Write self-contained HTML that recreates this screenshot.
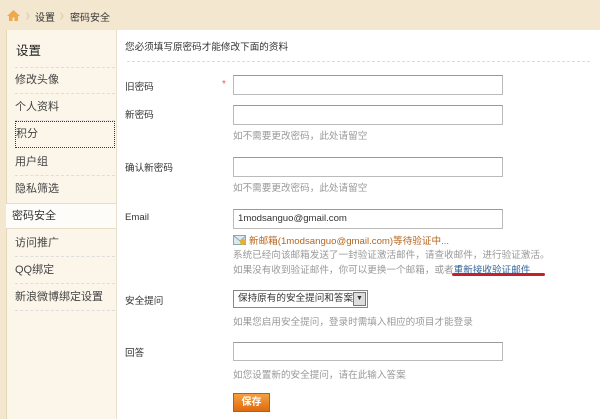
<!DOCTYPE html><html><head><meta charset="utf-8"><style>
*{margin:0;padding:0;box-sizing:border-box}
body{width:600px;height:419px;overflow:hidden;background:#f4e7cf;font-family:"Liberation Sans","Noto Sans CJK SC",sans-serif;font-size:9.6px;color:#333;position:relative}
.a{position:absolute;white-space:nowrap}
.side{position:absolute;left:6px;top:30px;width:110px;height:389px;background:#fbf5ea;border-left:1px solid #e6d6b8}
.main{position:absolute;left:116px;top:30px;width:484px;height:389px;background:#fff;border-left:1px solid #eadfca}
.it{position:absolute;left:8px;width:100px;border-bottom:1px dashed #ddd;height:27px;line-height:27px;font-size:11px;color:#444}
.inp{position:absolute;left:233px;width:270px;height:20px;border:1px solid #bbb;border-top-color:#999;background:#fff}
.hint{color:#999;font-size:9.6px}
</style></head><body>
<svg class="a" style="left:7px;top:10px" width="13" height="11" viewBox="0 0 13 11"><path d="M6.5 0L0 6h2v5h3.5V7.5h2V11H11V6h2z" fill="#f0a94a"/></svg>
<svg class="a" style="left:26px;top:12px" width="4" height="8"><path d="M0.5 0.5L3 4L0.5 7.5" stroke="#d8c8a8" fill="none"/></svg>
<div class="a" style="left:35px;top:9px;font-size:10px;color:#333">设置</div>
<svg class="a" style="left:60px;top:12px" width="4" height="8"><path d="M0.5 0.5L3 4L0.5 7.5" stroke="#d8c8a8" fill="none"/></svg>
<div class="a" style="left:70px;top:9px;font-size:10px;color:#333">密码安全</div>
<div class="side">
<div class="a" style="left:9px;top:10px;font-size:12.5px;color:#222">设置</div>
<div style="position:absolute;left:8px;top:37px;width:100px;border-top:1px dashed #ddd"></div>
<div class="it" style="top:37px">修改头像</div>
<div class="it" style="top:64px">个人资料</div>
<div class="it" style="top:91px;left:8px;border:1px dotted #333;height:27px;line-height:25px">积分</div>
<div class="it" style="top:119px">用户组</div>
<div class="it" style="top:146px;border:0">隐私筛选</div>
<div style="position:absolute;left:-1px;top:173px;width:112px;height:26px;background:#fefcf8;border-top:1px solid #e6dcc8;border-bottom:1px solid #e6dcc8;padding-left:6px;line-height:24px;font-size:11px;color:#333">密码安全</div>
<div class="it" style="top:200px">访问推广</div>
<div class="it" style="top:227px">QQ绑定</div>
<div class="it" style="top:254px">新浪微博绑定设置</div>
</div>
<div class="main"></div>
<div class="a" style="left:125px;top:39px">您必须填写原密码才能修改下面的资料</div>
<div class="a" style="left:127px;top:61px;width:463px;border-top:1px dashed #ddd"></div>
<div class="a" style="left:125px;top:79px">旧密码</div>
<div class="a" style="left:222px;top:79px;color:#e55;font-size:10px">*</div>
<div class="inp" style="top:75px"></div>
<div class="a" style="left:125px;top:107px">新密码</div>
<div class="inp" style="top:105px"></div>
<div class="a hint" style="left:233px;top:128px">如不需要更改密码，此处请留空</div>
<div class="a" style="left:125px;top:160px">确认新密码</div>
<div class="inp" style="top:157px"></div>
<div class="a hint" style="left:233px;top:180px">如不需要更改密码，此处请留空</div>
<div class="a" style="left:125px;top:212px">Email</div>
<div class="inp" style="top:209px;padding:3px 4px;font-size:9.6px;color:#333;line-height:12px">1modsanguo@gmail.com</div>
<svg class="a" style="left:233px;top:234px" width="13" height="11"><rect x="0.5" y="1.5" width="12" height="9" fill="#dde8f0" stroke="#8aa"/><path d="M1 2l6 5 6-5" stroke="#8aa" fill="none"/><circle cx="10" cy="8" r="3" fill="#e8b030"/></svg>
<div class="a" style="left:249px;top:233px;color:#b5651d;font-size:9.6px">新邮箱(1modsanguo@gmail.com)等待验证中...</div>
<div class="a hint" style="left:233px;top:247px">系统已经向该邮箱发送了一封验证激活邮件，请查收邮件，进行验证激活。</div>
<div class="a hint" style="left:233px;top:262px">如果没有收到验证邮件，你可以更换一个邮箱，或者<span style="color:#336699">重新接收验证邮件</span></div>
<div class="a" style="left:452px;top:273px;width:93px;height:3px;background:#c8202a;border-radius:2px"></div>
<div class="a" style="left:125px;top:293px">安全提问</div>
<div class="a" style="left:233px;top:290px;width:135px;height:18px;border:1px solid #888;background:#fff;font-size:9.6px;line-height:16px;padding-left:4px">保持原有的安全提问和答案<span style="position:absolute;right:1px;top:1px;width:13px;height:14px;background:#ddd;border:1px solid #777;font-size:7px;line-height:12px;text-align:center">▼</span></div>
<div class="a hint" style="left:233px;top:314px">如果您启用安全提问，登录时需填入相应的项目才能登录</div>
<div class="a" style="left:125px;top:345px">回答</div>
<div class="inp" style="top:342px;height:19px"></div>
<div class="a hint" style="left:233px;top:367px">如您设置新的安全提问，请在此输入答案</div>
<div class="a" style="left:233px;top:393px;width:37px;height:19px;background:linear-gradient(#f5a040,#e06a10);border:1px solid #c55a00;color:#fff;font-weight:bold;font-size:10px;text-align:center;line-height:17px">保存</div>
</body></html>
